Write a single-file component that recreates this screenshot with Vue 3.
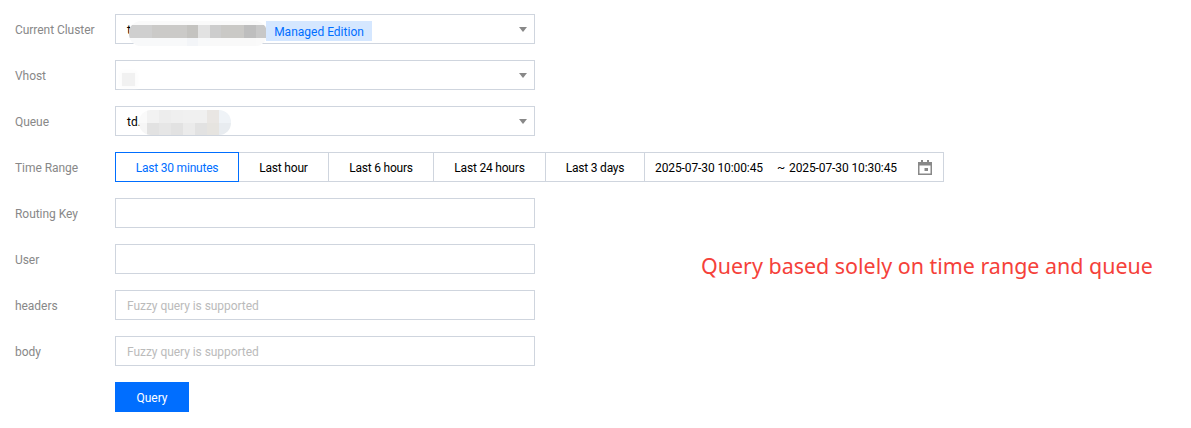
<script setup>
const clusterTiles = [
  ['#cfcfcf', '#f8f9fa', 1], ['#cfcfcf', '#f8f9fa', 1], ['#cbcac8', '#f8f9fa', 1], ['#cbcac8', '#f8f9fa', 1],
  ['#cbcac8', '#f8f9fa', 1], ['#c4c3c0', '#f3f5f8', 1], ['#e2e2e2', '#f8f9fa', 1], ['#cdcdcd', '#f9f9f9', 1],
  ['#cac9c6', '#f9f9f9', 1], ['#cac9c6', '#f9f9f9', 1], ['#bebebe', '#f9f9f9', 1], ['#c8c8c8', '#fafafa', 1],
]
const queueTiles = [
  ['#fafafa', '#f6f6f6', 8], ['#f2f2f2', '#e2e2e2', 12], ['#ededed', '#e6e6e6', 12], ['#efefef', '#e2e2e2', 12],
  ['#f0f0f0', '#ebebeb', 12], ['#f0f0f0', '#e2e2e2', 12], ['#e9e6e3', '#e6e4e0', 12], ['#eff3f7', '#e8ecf0', 12],
]
const ranges = [
  { label: 'Last 30 minutes', width: 124, active: true },
  { label: 'Last hour', width: 91 },
  { label: 'Last 6 hours', width: 106 },
  { label: 'Last 24 hours', width: 113 },
  { label: 'Last 3 days', width: 100 },
]
</script>

<template>
  <div class="page">
    <form class="form" @submit.prevent>
      <div class="row">
        <label class="label">Current Cluster</label>
        <div class="field select">
          <span class="value">t</span>
          <span class="mosaic cluster">
            <span v-for="(c, i) in clusterTiles" :key="i" class="col">
              <i :style="{ background: c[0] }"></i><i :style="{ background: c[1] }"></i>
            </span>
          </span>
          <span class="tag">Managed Edition</span>
          <span class="caret"></span>
        </div>
      </div>
      <div class="row">
        <label class="label">Vhost</label>
        <div class="field select">
          <span class="smudge"></span>
          <span class="caret"></span>
        </div>
      </div>
      <div class="row">
        <label class="label">Queue</label>
        <div class="field select">
          <span class="value">td.</span>
          <span class="mosaic queue">
            <span v-for="(c, i) in queueTiles" :key="i" class="col" :style="{ width: c[2] + 'px' }">
              <i :style="{ background: c[0] }"></i><i :style="{ background: c[1] }"></i>
            </span>
          </span>
          <span class="caret"></span>
        </div>
      </div>
      <div class="row">
        <label class="label">Time Range</label>
        <div class="ranges">
          <button
            v-for="r in ranges"
            :key="r.label"
            type="button"
            class="range"
            :class="{ active: r.active }"
            :style="{ width: r.width + 'px' }"
          >{{ r.label }}</button>
          <div class="picker">
            <span>2025-07-30 10:00:45</span>
            <span class="tilde">~</span>
            <span>2025-07-30 10:30:45</span>
            <svg class="cal" width="14" height="15" viewBox="0 0 14 15">
              <path fill="#888" fill-rule="evenodd" d="M3 0h2v2h4V0h2v2h3v13H0V2h3V0zM1.5 5.5v8h11v-8h-11z"/>
              <rect x="6.5" y="8" width="3.5" height="3" fill="#888"/>
            </svg>
          </div>
        </div>
      </div>
      <div class="row">
        <label class="label">Routing Key</label>
        <input class="field input" />
      </div>
      <div class="row">
        <label class="label">User</label>
        <input class="field input" />
      </div>
      <div class="row">
        <label class="label">headers</label>
        <input class="field input" placeholder="Fuzzy query is supported" />
      </div>
      <div class="row">
        <label class="label">body</label>
        <input class="field input" placeholder="Fuzzy query is supported" />
      </div>
      <div class="row">
        <span class="label"></span>
        <button type="submit" class="query">Query</button>
      </div>
    </form>
    <p class="note">Query based solely on time range and queue</p>
  </div>
</template>

<style scoped>
.page {
  position: relative;
  width: 1191px;
  height: 428px;
  box-sizing: border-box;
  padding: 14px 0 0 15px;
  background: #fff;
  font-family: Roboto, "Noto Sans", sans-serif;
  font-size: 12px;
  color: #000;
  overflow: hidden;
}
.form {
  display: flex;
  flex-direction: column;
  gap: 16px;
}
.row {
  display: flex;
  align-items: center;
  height: 30px;
}
.label {
  width: 100px;
  flex: none;
  padding-top: 2px;
  color: #888;
  letter-spacing: -0.05px;
}
.field {
  width: 420px;
  height: 30px;
  box-sizing: border-box;
  border: 1px solid #cfd5de;
  background: #fff;
  font: inherit;
}
.select {
  position: relative;
  display: flex;
  align-items: center;
  padding: 2px 0 0 11px;
}
.input {
  padding: 2px 11px 0;
  outline: none;
  color: #000;
  letter-spacing: -0.05px;
}
.input::placeholder {
  color: #bbb;
  opacity: 1;
}
.value {
  flex: none;
}
.tag {
  position: absolute;
  left: 150px;
  top: 6px;
  height: 20px;
  width: 106px;
  background: #d5e7ff;
  color: #006eff;
  text-align: center;
  line-height: 22px;
}
.caret {
  position: absolute;
  right: 7px;
  top: 12px;
  width: 0;
  height: 0;
  border-left: 4.5px solid transparent;
  border-right: 4.5px solid transparent;
  border-top: 5px solid #888;
}
.mosaic {
  position: absolute;
  display: flex;
  overflow: hidden;
}
.cluster {
  left: 13px;
  top: 6px;
  height: 25px;
  padding-top: 4px;
  box-sizing: border-box;
  background: #fafafa;
  border-radius: 12px;
}
.queue {
  left: 23px;
  top: 3px;
  height: 25px;
  border-radius: 12px;
}
.col {
  display: flex;
  flex-direction: column;
  width: 11.5px;
}
.col i {
  display: block;
}
.cluster .col i {
  height: 13px;
}
.cluster .col i:last-child {
  height: 8px;
}
.queue .col i {
  height: 12.5px;
}
.smudge {
  position: absolute;
  left: 6px;
  top: 12px;
  width: 13px;
  height: 13px;
  background: #f1f1f1;
  box-shadow: 0 0 4px 2px #fbfbfb;
}
.ranges {
  display: flex;
}
.range {
  height: 30px;
  box-sizing: border-box;
  padding: 2px 0 0;
  margin-left: -1px;
  border: 1px solid #cfd5de;
  background: #fff;
  font: inherit;
  letter-spacing: -0.2px;
  color: #000;
}
.range:first-child {
  margin-left: 0;
}
.range.active {
  position: relative;
  z-index: 1;
  border-color: #006eff;
  color: #006eff;
}
.picker {
  display: flex;
  align-items: center;
  width: 300px;
  height: 30px;
  box-sizing: border-box;
  margin-left: -1px;
  padding: 2px 0 0 10px;
  border: 1px solid #cfd5de;
  letter-spacing: -0.1px;
  white-space: nowrap;
}
.tilde {
  margin: 0 4px 0 14px;
}
.cal {
  margin: 0 0 1px 21px;
}
.query {
  width: 74px;
  height: 30px;
  padding: 2px 0 0;
  border: 0;
  background: #006eff;
  color: #fff;
  font: inherit;
}
.note {
  position: absolute;
  left: 701px;
  top: 251px;
  margin: 0;
  font-family: "Noto Sans", sans-serif;
  font-size: 21.45px;
  line-height: 30px;
  color: #f5413a;
  white-space: nowrap;
}
</style>
